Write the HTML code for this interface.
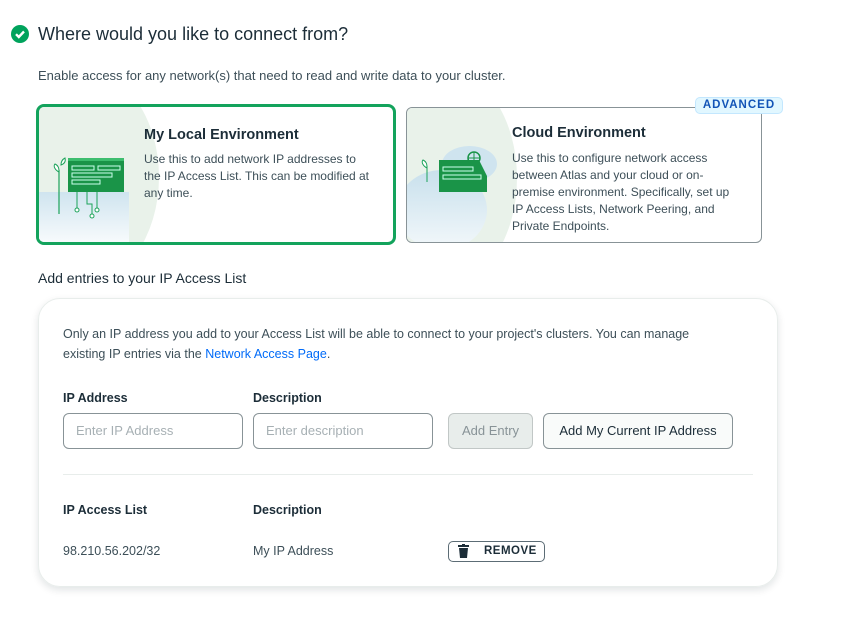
<!DOCTYPE html>
<html><head><style>
*{box-sizing:border-box;margin:0;padding:0}
body{width:863px;height:625px;background:#fff;font-family:"Liberation Sans",sans-serif;color:#1c2d38;position:relative;overflow:hidden}
.a{position:absolute}
.t{font-size:12px;line-height:17px;color:#3d4f58;white-space:nowrap}
.h{font-size:14.5px;font-weight:bold;color:#1c2d38}
.lbl{font-size:12.5px;font-weight:bold;color:#1c2d38}
.inp{border:1px solid #889397;border-radius:6px;height:36px;font-size:13px;color:#a7b0b4;padding:9px 12px}
.btn{border:1px solid #889397;border-radius:6px;height:36px;font-size:13px;text-align:center;line-height:34px}
</style></head><body>
<svg class="a" style="left:11px;top:25px" width="18" height="18" viewBox="0 0 18 18"><circle cx="9" cy="9" r="9" fill="#00a35c"/><path d="M5 9.2l2.8 2.8L13 6.5" stroke="#fff" stroke-width="2.4" fill="none"/></svg>
<div class="a" style="left:38px;top:24px;font-size:18px;color:#1c2d38">Where would you like to connect from?</div>
<div class="a" style="left:38px;top:68px;font-size:13px;color:#3d4f58">Enable access for any network(s) that need to read and write data to your cluster.</div>

<div class="a" style="left:36px;top:104px;width:360px;height:141px;border:3px solid #13a35c;border-radius:8px;overflow:hidden">
<div class="a" style="left:-40px;top:-40px;width:160px;height:220px;border-radius:50%;background:#e9f2ea"></div>
<div class="a" style="left:0;top:85px;width:90px;height:60px;background:linear-gradient(#cfe4ef,#fff)"></div>
<svg class="a" style="left:10px;top:35px" width="80" height="85"><path d="M10 72V28" stroke="#1ca35a" stroke-width="1.2" fill="none"/><path d="M10 30c-4-2-6-6-4-8 4 2 4 5 4 8zM12 23c0-4 2-6 4-7 1 4-1 6-4 7z" stroke="#1ca35a" fill="#fff"/><rect x="19" y="16" width="56" height="34" fill="#1a9448"/><rect x="19" y="16" width="56" height="3" fill="#3dbd6e"/><rect x="23" y="24" width="22" height="4" fill="none" stroke="#cfe"/><rect x="49" y="24" width="22" height="4" fill="none" stroke="#cfe"/><rect x="23" y="31" width="40" height="4" fill="none" stroke="#cfe"/><rect x="23" y="38" width="28" height="4" fill="none" stroke="#cfe"/><path d="M28 50v18M38 50v12h5v10M48 50v18" stroke="#1ca35a" fill="none"/><circle cx="28" cy="68" r="2" fill="#fff" stroke="#1ca35a"/><circle cx="43" cy="74" r="2" fill="#fff" stroke="#1ca35a"/><circle cx="48" cy="68" r="2" fill="#fff" stroke="#1ca35a"/></svg>
<div class="a h" style="left:105px;top:20px">My Local Environment</div>
<div class="a t" style="left:105px;top:44px">Use this to add network IP addresses to<br>the IP Access List. This can be modified at<br>any time.</div>
</div>

<div class="a" style="left:406px;top:107px;width:356px;height:136px;border:1px solid #889397;border-radius:6px;overflow:hidden">
<div class="a" style="left:-40px;top:-40px;width:150px;height:220px;border-radius:50%;background:#e9f2ea"></div>
<div class="a" style="left:-10px;top:62px;width:90px;height:80px;border-radius:50%;background:linear-gradient(#c8e0ec,#f3f8fb)"></div>
<div class="a" style="left:35px;top:38px;width:55px;height:36px;border-radius:50%;background:#cfe4ef"></div>
<svg class="a" style="left:10px;top:38px" width="80" height="60"><path d="M10 36V20" stroke="#1ca35a" fill="none"/><path d="M10 22c-4-2-6-6-4-8 4 2 4 5 4 8z" stroke="#1ca35a" fill="#fff"/><path d="M22 14h40l8 16v16H22z" fill="#1a9448"/><rect x="26" y="21" width="30" height="4" fill="none" stroke="#cfe"/><rect x="26" y="29" width="38" height="4" fill="none" stroke="#cfe"/><circle cx="57" cy="12" r="6" fill="none" stroke="#1a9448" stroke-width="1.5"/><path d="M51 12h12M57 6v12" stroke="#1a9448"/></svg>
<div class="a h" style="left:105px;top:17px">Cloud Environment</div>
<div class="a t" style="left:105px;top:42px">Use this to configure network access<br>between Atlas and your cloud or on-<br>premise environment. Specifically, set up<br>IP Access Lists, Network Peering, and<br>Private Endpoints.</div>
</div>
<div class="a" style="left:695px;top:97px;width:88px;height:17px;border:1px solid #c3e7fe;background:#e1f7ff;border-radius:5px;font-size:11.5px;font-weight:bold;letter-spacing:1px;color:#1254b7;text-align:center;line-height:15px">ADVANCED</div>

<div class="a" style="left:38px;top:270px;font-size:14px;color:#1c2d38">Add entries to your IP Access List</div>

<div class="a" style="left:38px;top:298px;width:740px;height:289px;border:1px solid #e8edeb;border-radius:22px;box-shadow:0 3px 8px rgba(0,30,43,.12)"></div>
<div class="a" style="left:63px;top:325px;width:700px;font-size:12.5px;line-height:19.5px;color:#3d4f58">Only an IP address you add to your Access List will be able to connect to your project's clusters. You can manage<br>existing IP entries via the <span style="color:#016bf8">Network Access Page</span>.</div>
<div class="a lbl" style="left:63px;top:391px">IP Address</div>
<div class="a lbl" style="left:253px;top:391px">Description</div>
<div class="a inp" style="left:63px;top:413px;width:180px">Enter IP Address</div>
<div class="a inp" style="left:253px;top:413px;width:180px">Enter description</div>
<div class="a btn" style="left:448px;top:413px;width:85px;background:#e8edeb;border-color:#c1c7c6;color:#889397">Add Entry</div>
<div class="a btn" style="left:543px;top:413px;width:190px;background:#f9fbfa;color:#1c2d38">Add My Current IP Address</div>
<div class="a" style="left:63px;top:474px;width:690px;height:1px;background:#e8edeb"></div>
<div class="a lbl" style="left:63px;top:503px">IP Access List</div>
<div class="a lbl" style="left:253px;top:503px">Description</div>
<div class="a" style="left:63px;top:544px;font-size:12.5px;color:#3d4f58">98.210.56.202/32</div>
<div class="a" style="left:253px;top:544px;font-size:12.5px;color:#3d4f58">My IP Address</div>
<div class="a" style="left:448px;top:541px;width:97px;height:21px;border:1px solid #5c6c75;border-radius:5px;font-size:11.5px;font-weight:bold;letter-spacing:.5px;color:#1c2d38;line-height:19px;padding-left:35px">REMOVE</div>
<svg class="a" style="left:458px;top:544px" width="11" height="14" viewBox="0 0 11 14"><rect x="0" y="1" width="11" height="2" fill="#1c2d38"/><rect x="4" y="0" width="3" height="2" fill="#1c2d38"/><path d="M1 4h9l-1 10H2z" fill="#1c2d38"/></svg>
</body></html>
